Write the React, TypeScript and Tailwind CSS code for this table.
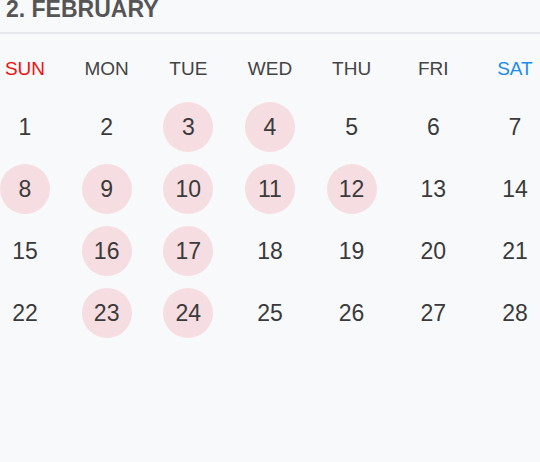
const days = ["SUN", "MON", "TUE", "WED", "THU", "FRI", "SAT"];
const marked = [3, 4, 8, 9, 10, 11, 12, 16, 17, 23, 24];

const weeks = [0, 1, 2, 3].map((w) => [1, 2, 3, 4, 5, 6, 7].map((d) => w * 7 + d));

export default function App() {
  return (
    <div className="w-[540px] h-[462px] overflow-hidden bg-[#f8f9fb] font-['Liberation_Sans',Arial,sans-serif]">
      <div className="h-[34px] border-b-2 border-[#e6e8eb] pl-[6px] text-[23px] font-bold leading-[19px] text-[#555555]">
        2. FEBRUARY
      </div>

      {/* day names */}
      <div className="mt-[25px] flex justify-between">
        {days.map((d, i) => (
          <div
            key={d}
            className={
              "w-[50px] text-center text-[19px] leading-[20px] " +
              (i === 0 ? "text-[#f01010]" : i === 6 ? "text-[#1a8cf0]" : "text-[#444444]")
            }
          >
            {d}
          </div>
        ))}
      </div>

      <div className="mt-[23px] flex flex-col gap-[12px]">
        {weeks.map((week, wi) => (
          <div key={wi} className="flex justify-between">
            {week.map((n) => (
              <div
                key={n}
                className={
                  "flex h-[50px] w-[50px] items-center justify-center rounded-full text-[23px] text-[#3a3a3a] " +
                  (marked.includes(n) ? "bg-[#f6dde1]" : "")
                }
              >
                {n}
              </div>
            ))}
          </div>
        ))}
      </div>
    </div>
  );
}
